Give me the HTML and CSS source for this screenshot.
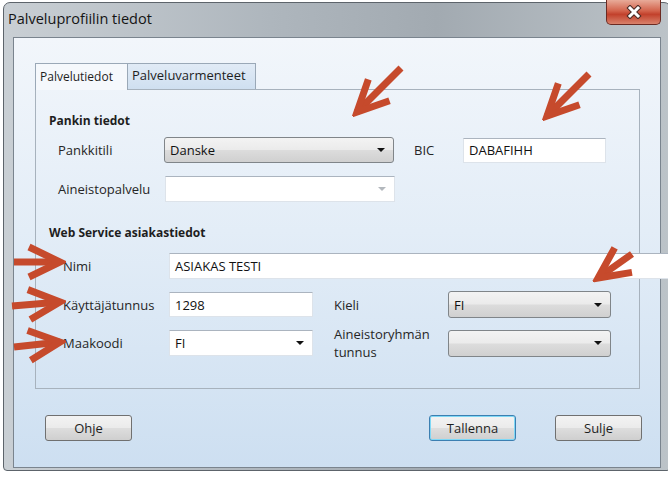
FILE: index.html
```html
<!DOCTYPE html>
<html>
    <head>
        <meta charset="utf-8">
        <link rel="stylesheet" href="styles.css">
    </head>
    <body>
        <div class="window">
            <div class="titlebar">
                <span class="title">Palveluprofiilin tiedot</span>
                <span class="close">
                    <svg width="20" height="14" viewBox="0 0 20 14">
                        <path d="M6 3 L14 11 M14 3 L6 11" stroke="#4a2b25" stroke-width="5" stroke-linecap="square"/>
                        <path d="M6 3 L14 11 M14 3 L6 11" stroke="#ffffff" stroke-width="3" stroke-linecap="square"/>
                    </svg>
                </span>
            </div>
            <div class="client">
                <div class="tabs">
                    <div class="tab active">Palvelutiedot</div>
                    <div class="tab">Palveluvarmenteet</div>
                </div>
                <div class="panel">
                    <div class="group-title">Pankin tiedot</div>
                    <div class="row row-bank">
                        <span class="label lbl-bank">Pankkitili</span>
                        <span class="combo combo-bank">Danske<i class="drop"></i></span>
                        <span class="label lbl-bic">BIC</span>
                        <span class="field field-bic">DABAFIHH</span>
                    </div>
                    <div class="row row-service">
                        <span class="label lbl-bank">Aineistopalvelu</span>
                        <span class="field field-service"><i class="drop drop-off"></i></span>
                    </div>

                    <div class="group-title group-ws">Web Service asiakastiedot</div>
                    <div class="row row-name">
                        <span class="label lbl-ws">Nimi</span>
                        <span class="field field-name">ASIAKAS TESTI</span>
                    </div>
                    <div class="row row-user">
                        <span class="label lbl-ws">Käyttäjätunnus</span>
                        <span class="field field-short">1298</span>
                        <span class="label lbl-right">Kieli</span>
                        <span class="combo combo-right">FI<i class="drop"></i></span>
                    </div>
                    <div class="row row-country">
                        <span class="label lbl-ws">Maakoodi</span>
                        <span class="field field-short field-country">FI<i class="drop"></i></span>
                        <span class="label lbl-right">Aineistoryhmän<br>tunnus</span>
                        <span class="combo combo-right"><i class="drop"></i></span>
                    </div>
                </div>
                <div class="buttons">
                    <span class="btn">Ohje</span>
                    <span class="btn btn-default">Tallenna</span>
                    <span class="btn btn-close">Sulje</span>
                </div>
            </div>
        </div>

        <!-- annotation arrows drawn over the screenshot -->
        <svg class="arrows" width="668" height="480" viewBox="0 0 668 480">
            <defs>
                <marker id="head" markerUnits="userSpaceOnUse" viewBox="-40 -22 46 44" refX="0" refY="0" markerWidth="46" markerHeight="44" orient="auto">
                    <path d="M-31 -15 L0 0 L-31 15" fill="none" stroke="#c64a2c" stroke-width="7"/>
                </marker>
            </defs>
            <g stroke="#c64a2c" stroke-width="7" fill="none" marker-end="url(#head)">
                <line x1="401" y1="68" x2="357" y2="112"/>
                <line x1="589" y1="74" x2="547" y2="116"/>
                <line x1="632" y1="254" x2="598" y2="278"/>
                <line x1="14" y1="262" x2="60" y2="262"/>
                <line x1="12" y1="306" x2="60" y2="302"/>
                <line x1="14" y1="347" x2="60" y2="342"/>
            </g>
        </svg>
    </body>
</html>
```

FILE: styles.css
```css
html {
    box-sizing: border-box;
}
*, *:before, *:after {
    box-sizing: inherit;
}

body {
    margin: 0;
    background-color: white;
    font-family: "Open Sans", "Noto Sans", sans-serif;
    font-size: 12px;
    color: #1e1e1e;
    position: relative;
    width: 668px;
    height: 480px;
    overflow: hidden;
}

.window {
    margin: 2px 0 0 3px;
    width: 668px;
    height: 469px;
    border: 1px solid #5d646b;
    border-radius: 7px 7px 4px 4px;
    background: linear-gradient(to right, #c9cfd4, #aeb6bd 40%, #a2aab1 65%, #bcc3c8);
}

.titlebar {
    height: 34px;
    display: flex;
    align-items: flex-start;
    padding-left: 4px;
}

.title {
    font-size: 14.5px;
    margin-top: 6px;
    color: #141414;
}

.close {
    margin-left: auto;
    margin-right: 9px;
    margin-top: -3px;
    width: 55px;
    height: 25px;
    border: 1px solid #6b2a22;
    border-top: none;
    border-radius: 0 0 5px 5px;
    background: linear-gradient(#e8ab99, #d3634c 45%, #c2412c 60%, #d9826b);
    display: flex;
    align-items: center;
    justify-content: center;
}

.client {
    margin-left: 9px;
    width: 648px;
    height: 431px;
    border: 1px solid #7a848e;
    background: linear-gradient(#f2f6fb, #e3edf7 45%, #cddff1);
    padding: 25px 0 0 21px;
}

.tabs {
    display: flex;
    height: 26px;
    align-items: flex-end;
}

.tab {
    height: 26px;
    border: 1px solid #9aa8b7;
    border-bottom: none;
    padding: 4px 5px 0 4px;
    flex-shrink: 0;
}

.tab.active {
    width: 93px;
    height: 27px;
    margin-bottom: -1px;
    background-color: #f5f8fc;
    position: relative;
    z-index: 1;
}

.tab:not(.active) {
    width: 128px;
    font-size: 13px;
    border-left: none;
    padding-top: 2px;
    background: linear-gradient(#e1ebf6, #cfdff0);
}

.panel {
    width: 605px;
    height: 300px;
    border: 1px solid #a7b2bd;
    padding: 23px 0 0 13px;
}

.group-title {
    font-weight: bold;
    height: 16px;
    line-height: 16px;
}

.group-ws {
    margin-top: 23px;
}

.row {
    display: flex;
    align-items: center;
    height: 26px;
}

.row > * {
    flex-shrink: 0;
}

.row-bank {
    margin-top: 8px;
}
.row-service {
    margin-top: 13px;
}
.row-name {
    margin-top: 12px;
}
.row-user {
    margin-top: 12px;
    height: 27px;
}
.row-country {
    margin-top: 11px;
    height: 28px;
}

.label {
    font-size: 13px;
    color: #262626;
}

.lbl-bank {
    margin-left: 9px;
    width: 106px;
}

.lbl-bic {
    margin-left: 20px;
    width: 49px;
}

.lbl-ws {
    margin-left: 14px;
    width: 106px;
}

.lbl-right {
    margin-left: 21px;
    width: 114px;
    line-height: 18px;
}

.field, .combo {
    position: relative;
    display: flex;
    align-items: center;
    padding-left: 5px;
    font-size: 13px;
    color: #111;
}

.field {
    background-color: white;
    border: 1px solid #dde3ea;
    border-top-color: #abb4bf;
}

.combo {
    border: 1px solid #808589;
    border-radius: 3px;
    background: linear-gradient(#f3f3f3, #ebebeb 48%, #dcdcdc 52%, #d0d0d0);
}

.drop {
    position: absolute;
    right: 8px;
    top: 50%;
    margin-top: -2px;
    border-left: 4px solid transparent;
    border-right: 4px solid transparent;
    border-top: 4px solid #111;
}

.drop-off {
    border-top-color: #b3b8bd;
}

.combo-bank {
    width: 230px;
    height: 26px;
}

.field-bic {
    width: 143px;
    height: 25px;
}

.field-service {
    width: 230px;
    height: 26px;
    margin-left: 1px;
}

.field-name {
    width: 499px;
    height: 26px;
    border-right: none;
}

.field-short {
    width: 144px;
    height: 25px;
}

.field-country {
    height: 26px;
}

.combo-right {
    width: 163px;
    height: 27px;
}

.buttons {
    display: flex;
    margin-top: 26px;
    padding: 0 18px 0 10px;
}

.btn {
    width: 87px;
    height: 26px;
    border: 1px solid #707070;
    border-radius: 3px;
    background: linear-gradient(#f3f3f3, #ebebeb 48%, #dddddd 52%, #cfcfcf);
    display: flex;
    align-items: center;
    justify-content: center;
    font-size: 13px;
}

.btn-default {
    margin-left: auto;
    border-color: #3c7fb1;
    box-shadow: inset 0 0 0 1px #7fd8f6;
}

.btn-close {
    margin-left: 39px;
}

.arrows {
    position: absolute;
    left: 0;
    top: 0;
    pointer-events: none;
}
```
